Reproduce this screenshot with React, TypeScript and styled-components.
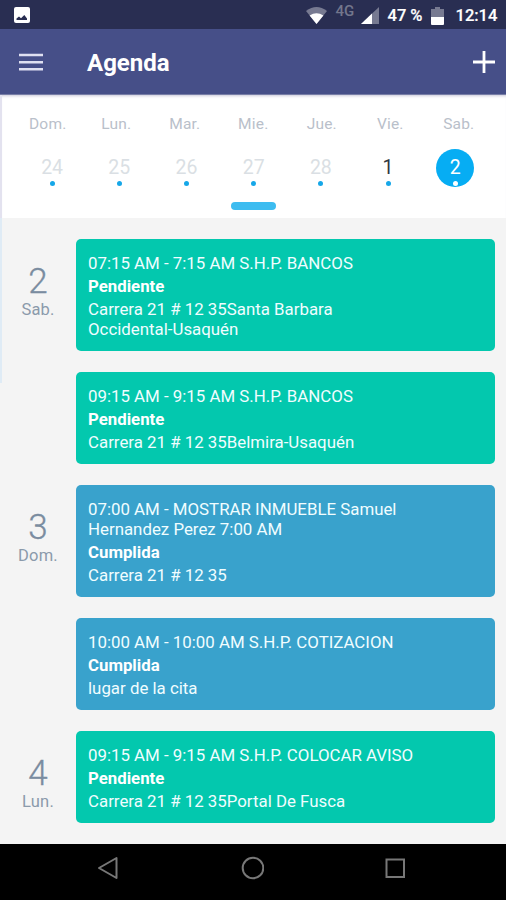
import React from 'react';
import styled, { createGlobalStyle } from 'styled-components';

const GlobalStyle = createGlobalStyle`
  * { box-sizing: border-box; }
  body { margin: 0; background: #f4f4f4; }
`;

const Screen = styled.div`
  display: flex;
  flex-direction: column;
  width: 506px;
  height: 900px;
  overflow: hidden;
  background: #f4f4f4;
  font-family: Roboto, 'Noto Sans', sans-serif;
`;

const StatusBar = styled.div`
  display: flex;
  align-items: center;
  justify-content: space-between;
  flex: none;
  height: 29px;
  padding: 2px 7.5px 0 14px;
  background: #292e52;
  color: #fff;
`;

const StatusGroup = styled.div`
  display: flex;
  align-items: center;
`;

const StatusText = styled.span<{ $width: number; $gap: number }>`
  width: ${(p) => p.$width}px;
  margin-left: ${(p) => p.$gap}px;
  font-size: 16.5px;
  line-height: 20px;
  font-weight: 500;
  white-space: nowrap;
  -webkit-text-stroke: 0.2px currentColor;
`;

const Network = styled.span`
  width: 20px;
  margin: -9px 0 0 9px;
  font-size: 15px;
  line-height: 16px;
  font-weight: 500;
  color: #73768c;
`;

const StatusIcon = styled.svg<{ $gap?: number }>`
  display: block;
  flex: none;
  margin-left: ${(p) => p.$gap ?? 0}px;
`;

const AppBar = styled.header`
  display: flex;
  align-items: center;
  flex: none;
  height: 66px;
  padding: 0 11px 0 18px;
  background: #464f88;
  border-bottom: 1px solid #777da6;
  color: #fff;
`;

const Title = styled.h1`
  flex: 1;
  margin: 3px 0 0 44px;
  font-size: 24px;
  line-height: 30px;
  font-weight: 700;
`;

const Icon = styled.svg`
  display: block;
  flex: none;
`;

const Calendar = styled.section`
  flex: none;
  height: 123px;
  background: #fff;
  border-left: 2px solid #e3e2ef;
  box-shadow: inset 0 3px 3px -2px #c9c7d8;
`;

const WeekNames = styled.div`
  display: grid;
  grid-template-columns: repeat(7, 68.5px);
  padding: 19px 0 0 11.5px;
  text-align: center;
  font-size: 15.5px;
  line-height: 20px;
  letter-spacing: 0.2px;
  color: #b9c0ca;
`;

const WeekDays = styled.div`
  display: grid;
  grid-template-columns: repeat(7, 67.2px);
  justify-items: center;
  padding: 15px 0 0 16.5px;
`;

const Day = styled.div<{ $tone: 'past' | 'normal' | 'selected' }>`
  display: flex;
  flex-direction: column;
  align-items: center;
  width: 38px;
  height: 38px;
  padding-top: 7px;
  border-radius: 50%;
  background: ${(p) => (p.$tone === 'selected' ? '#06adf3' : 'transparent')};
  color: ${(p) => ({ past: '#dadfe4', normal: '#2f3742', selected: '#fff' })[p.$tone]};
  font-size: 19.5px;
  line-height: 24px;
`;

const Dot = styled.i<{ $light: boolean }>`
  width: 5px;
  height: 5px;
  margin-top: 1px;
  border-radius: 50%;
  background: ${(p) => (p.$light ? '#fff' : '#16a7e8')};
`;

const Knob = styled.div`
  width: 45px;
  height: 8px;
  margin: 15px auto 0 229px;
  border-radius: 4px;
  background: #3dbcf0;
`;

const Agenda = styled.main`
  flex: 1;
  min-height: 0;
  padding-top: 21.3px;
  border-left: 2px solid transparent;
  border-image: linear-gradient(#dfebf5 165px, transparent 165px) 0 0 0 2;
  overflow: hidden;
`;

const DayGroup = styled.section`
  display: grid;
  grid-template-columns: 74px 418.5px;
`;

const DateLabel = styled.div`
  display: flex;
  flex-direction: column;
  align-items: center;
  padding: 23.2px 2px 0 0;
  color: #7a8ca0;
`;

const DateNumber = styled.span`
  font-size: 35px;
  line-height: 40px;
  font-weight: 300;
  -webkit-text-stroke: 0.3px currentColor;
`;

const DateName = styled.span`
  margin-top: -2.4px;
  font-size: 16.5px;
  line-height: 20px;
  letter-spacing: 0.2px;
  color: #8b9aab;
`;

const Card = styled.article<{ $done: boolean }>`
  margin-bottom: 21px;
  padding: 14.2px 60px 11.8px 12px;
  border-radius: 5px;
  background: ${(p) => (p.$done ? '#39a2cc' : '#03c8ae')};
  color: #f0fdff;
  font-size: 16.85px;
  line-height: 20px;
`;

const Line = styled.p`
  margin: 0;
  white-space: pre-line;
`;

const Status = styled.p`
  margin: 3px 0;
  font-size: 16.8px;
  font-weight: 700;
  color: #fff;
`;

const NavBar = styled.nav`
  display: flex;
  align-items: center;
  justify-content: space-between;
  flex: none;
  height: 56px;
  padding: 0 99px 9px 96px;
  background: #000;
`;

type Tone = 'past' | 'normal' | 'selected';
const names = ['Dom.', 'Lun.', 'Mar.', 'Mie.', 'Jue.', 'Vie.', 'Sab.'];
const days: [string, Tone][] = [
  ['24', 'past'], ['25', 'past'], ['26', 'past'], ['27', 'past'],
  ['28', 'past'], ['1', 'normal'], ['2', 'selected'],
];

const agenda = [
  {
    number: '2', name: 'Sab.', items: [
      { title: '07:15 AM - 7:15 AM S.H.P. BANCOS', done: false, place: 'Carrera 21 # 12 35Santa Barbara\nOccidental-Usaquén' },
      { title: '09:15 AM - 9:15 AM S.H.P. BANCOS', done: false, place: 'Carrera 21 # 12 35Belmira-Usaquén' },
    ],
  },
  {
    number: '3', name: 'Dom.', items: [
      { title: '07:00 AM - MOSTRAR INMUEBLE Samuel\nHernandez Perez 7:00 AM', done: true, place: 'Carrera 21 # 12 35' },
      { title: '10:00 AM - 10:00 AM S.H.P. COTIZACION', done: true, place: 'lugar de la cita' },
    ],
  },
  {
    number: '4', name: 'Lun.', items: [
      { title: '09:15 AM - 9:15 AM S.H.P. COLOCAR AVISO', done: false, place: 'Carrera 21 # 12 35Portal De Fusca' },
    ],
  },
];

export default function App() {
  return (
    <Screen>
      <GlobalStyle />
      <StatusBar>
        <StatusIcon width="16" height="17" viewBox="0 0 16 17">
          <rect width="16" height="16" rx="2" fill="#fff" />
          <path d="M2.5 13V11.5L5 9.5l2 1.7L10.3 8l2.7 3.5V13z" fill="#292e52" />
        </StatusIcon>
        <StatusGroup>
          <StatusIcon width="21" height="17" viewBox="0 0 21 17">
            <path d="M0 4Q10.5-4 21 4L10.5 17z" fill="#777a91" />
            <path d="M3.6 8.6Q10.5 4 17.4 8.6L10.5 17z" fill="#fff" />
          </StatusIcon>
          <Network>4G</Network>
          <StatusIcon width="18" height="17" viewBox="0 0 18 17" $gap={5}>
            <path d="M18 0v17H0z" fill="#777a91" />
            <path d="M11 6.6V17H0z" fill="#fff" />
          </StatusIcon>
          <StatusText $width={36} $gap={9}>47 %</StatusText>
          <StatusIcon width="13" height="18" viewBox="0 0 13 18" $gap={7}>
            <path d="M4 0h5v2h4v8H0V2h4z" fill="#777a91" />
            <path d="M0 10h13v7q0 1-1 1H1q-1 0-1-1z" fill="#fff" />
          </StatusIcon>
          <StatusText $width={43} $gap={12}>12:14</StatusText>
        </StatusGroup>
      </StatusBar>
      <AppBar>
        <Icon width="25" height="18" viewBox="0 0 25 18">
          <path d="M1 2h24M1 9.2h24M1 16.2h24" stroke="#dfe0f1" strokeWidth="2.4" />
        </Icon>
        <Title>Agenda</Title>
        <Icon width="22" height="22" viewBox="0 0 22 22">
          <path d="M0 11h22M11 0v22" stroke="#fff" strokeWidth="2.8" />
        </Icon>
      </AppBar>
      <Calendar>
        <WeekNames>{names.map((n) => <span key={n}>{n}</span>)}</WeekNames>
        <WeekDays>
          {days.map(([n, tone]) => (
            <Day key={n} $tone={tone}>
              {n}
              <Dot $light={tone === 'selected'} />
            </Day>
          ))}
        </WeekDays>
        <Knob />
      </Calendar>
      <Agenda>
        {agenda.map((group) => (
          <DayGroup key={group.number}>
            <DateLabel>
              <DateNumber>{group.number}</DateNumber>
              <DateName>{group.name}</DateName>
            </DateLabel>
            <div>
              {group.items.map((item) => (
                <Card key={item.title} $done={item.done}>
                  <Line>{item.title}</Line>
                  <Status>{item.done ? 'Cumplida' : 'Pendiente'}</Status>
                  <Line>{item.place}</Line>
                </Card>
              ))}
            </div>
          </DayGroup>
        ))}
      </Agenda>
      <NavBar>
        <Icon width="24" height="24" viewBox="0 0 24 24">
          <path d="M20.5 2v20L3 12z" fill="none" stroke="#777" strokeWidth="2" strokeLinejoin="round" />
        </Icon>
        <Icon width="24" height="24" viewBox="0 0 24 24">
          <circle cx="13" cy="12" r="10.3" fill="none" stroke="#777" strokeWidth="2" />
        </Icon>
        <Icon width="24" height="24" viewBox="0 0 24 24">
          <rect x="3.5" y="3.5" width="17.5" height="17.5" fill="none" stroke="#777" strokeWidth="2" />
        </Icon>
      </NavBar>
    </Screen>
  );
}
